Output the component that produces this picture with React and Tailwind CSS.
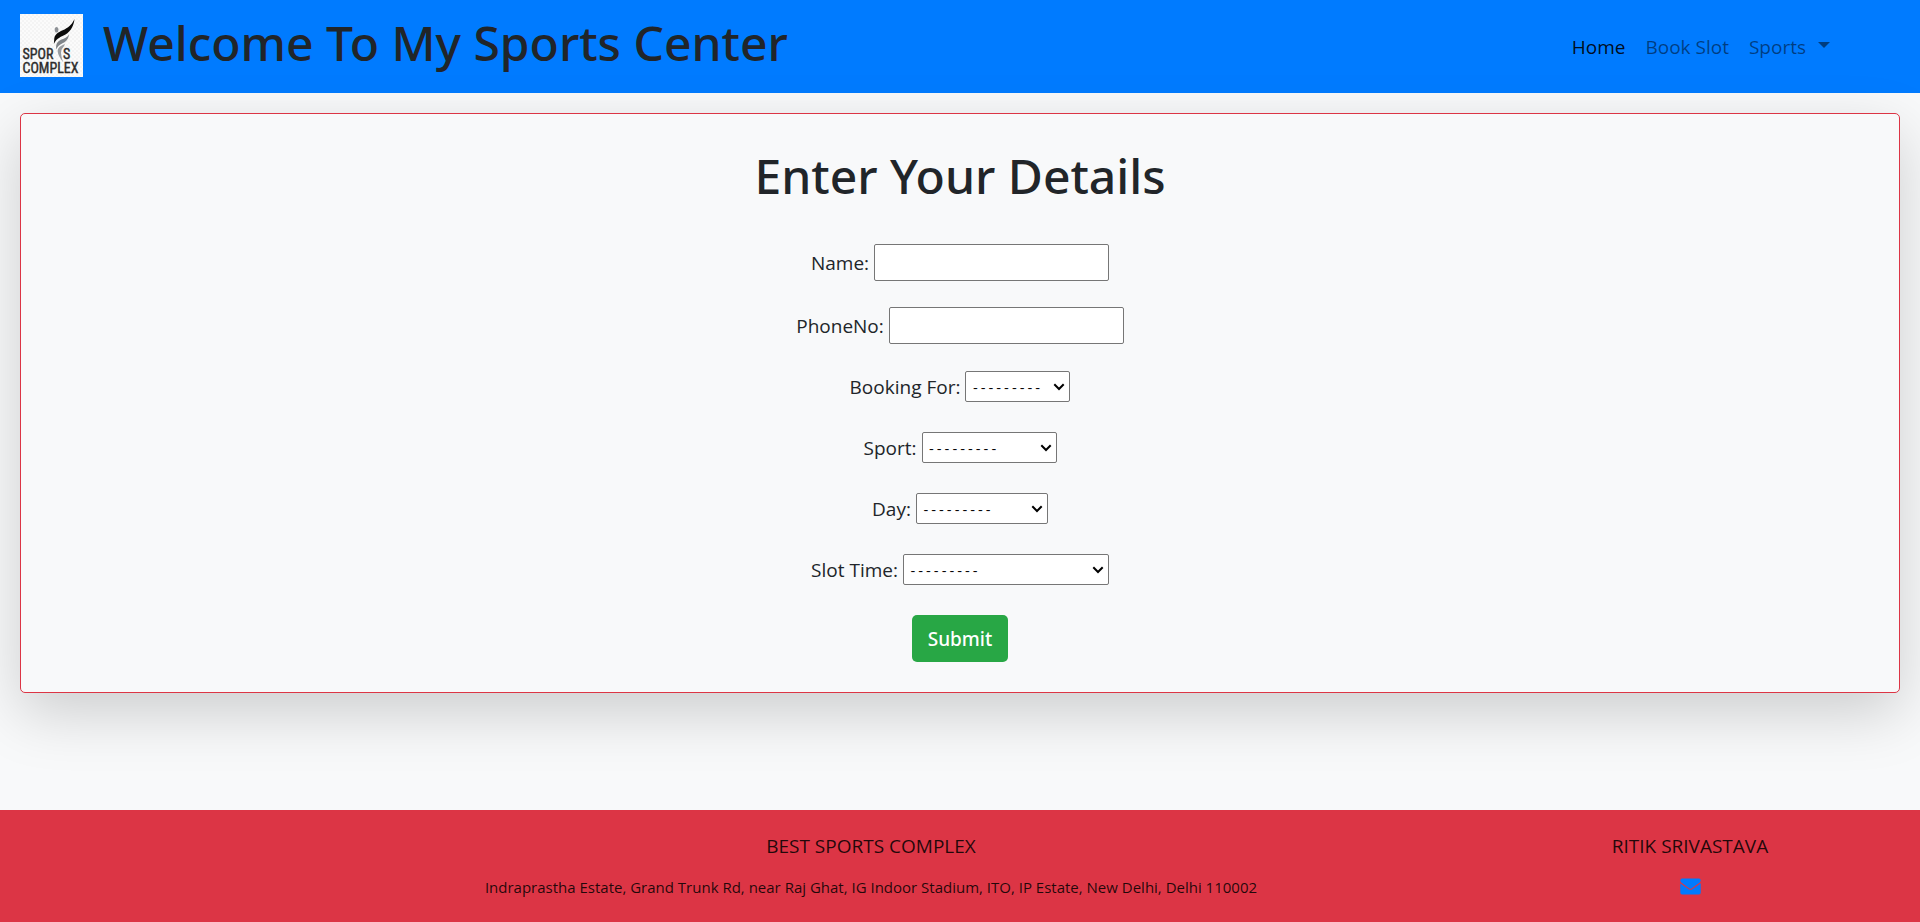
import React from "react";

function Logo() {
  return (
    <svg viewBox="0 0 63 63" className="size-[63px] shrink-0" role="img" aria-label="Sports Complex">
      <defs>
        <pattern id="weave" width="4" height="4" patternUnits="userSpaceOnUse">
          <rect width="4" height="4" fill="#fbfbfb" />
          <rect width="2" height="2" fill="#f4f4f4" />
          <rect x="2" y="2" width="2" height="2" fill="#f4f4f4" />
        </pattern>
      </defs>
      <rect width="63" height="63" fill="url(#weave)" />
      <ellipse cx="36.6" cy="15.8" rx="1.9" ry="2.8" fill="#8d9196" />
      <path d="M54.500 5C52.500 9.500 50 12.500 44.500 15.500C39.500 17.800 35.500 19 34.300 24L33.900 30C36 25.500 39 23.500 43.500 21.500C49 19 53.500 14 54.500 5Z" fill="#0b0b0b" />
      <path d="M49 20.500C47 23.500 44.500 24.300 41.500 25.500C37.500 27.200 35.500 30 36.300 35.500C37.500 31.800 40 30.500 43 29C46 27.500 48.300 25.500 49 20.500Z" fill="#7f8489" />
      <path d="M45 30C43 31 39.500 32 38 35C36.800 38.500 39.500 43.500 43 48C41.500 43 40.600 39.500 41.300 36.500C42 34 44 33 45 30Z" fill="#999da1" />
      <g fill="#2b2b2b" fontFamily="'Liberation Sans Narrow', 'Roboto Condensed', sans-serif" fontSize="14" stroke="#2b2b2b" strokeWidth="0.4">
        <text x="2.500" y="44.500">SPOR</text>
        <text x="43" y="44.500">S</text>
        <text x="2.500" y="58.500">COMPLEX</text>
      </g>
    </svg>
  );
}

function Header() {
  return (
    <header className="flex items-center justify-between bg-[#007bff] pt-[14px] pr-[90px] pb-4 pl-5">
      <div className="flex items-start gap-5">
        <Logo />
        <h1 className="font-['Noto_Sans',sans-serif] text-[48px] leading-[58px] font-medium text-[#212529]">
          Welcome To My Sports Center
        </h1>
      </div>
      <nav aria-label="Main" className="flex items-center gap-5 pt-[3px] text-[19px] leading-[30px]">
        <a href="#home" className="text-black/90">Home</a>
        <a href="#book" className="text-black/50">Book Slot</a>
        <a href="#sports" className="flex items-center gap-3 text-black/50">
          Sports
          <span className="mb-1 border-x-[6px] border-t-[6px] border-x-transparent border-t-black/50" />
        </a>
      </nav>
    </header>
  );
}

function TextField({ id, label, type }) {
  return (
    <div className="flex items-center gap-[5px]">
      <label htmlFor={id}>{label}</label>
      <input id={id} type={type} className="h-[37px] w-[235px] rounded-[2px] border border-[#767676] bg-white px-1" />
    </div>
  );
}

function SelectField({ id, label, width, options }) {
  return (
    <div className="flex items-center gap-[5px]">
      <label htmlFor={id}>{label}</label>
      <div className="relative flex">
        <select
          id={id}
          className={`h-[31px] appearance-none rounded-[2px] border border-[#767676] bg-white pt-[2px] pl-[5px] font-['Liberation_Mono',monospace] text-[13px] text-black ${width}`}
        >
          <option value="">---------</option>
          {options.map((option) => (
            <option key={option}>{option}</option>
          ))}
        </select>
        <svg
          viewBox="0 0 12 8"
          className="pointer-events-none absolute top-[12px] right-[5px] h-2 w-3"
          fill="none"
          stroke="#000"
          strokeWidth="2"
          aria-hidden="true"
        >
          <path d="M1.300 1.300L6 6L10.700 1.300" />
        </svg>
      </div>
    </div>
  );
}

function BookingForm() {
  return (
    <form
      onSubmit={(event) => event.preventDefault()}
      className="m-5 flex flex-col items-center rounded-[5px] border border-[#dc3545] bg-[#f8f9fa] px-5 pt-8 pb-[30px] text-[19px] leading-[30px] text-[#212529] shadow-[0_20px_60px_rgba(0,0,0,0.175)]"
    >
      <h2 className="font-['Noto_Sans',sans-serif] text-[48px] leading-[60px] font-medium">Enter Your Details</h2>
      <div className="mt-[38px] flex flex-col items-center gap-[26px]">
        <TextField id="name" label="Name:" type="text" />
        <TextField id="phone" label="PhoneNo:" type="tel" />
      </div>
      <div className="mt-[27px] flex flex-col items-center gap-[30px]">
        <SelectField id="booking-for" label="Booking For:" width="w-[105px]" options={["Self", "Team"]} />
        <SelectField id="sport" label="Sport:" width="w-[135px]" options={["Cricket", "Football", "Badminton"]} />
        <SelectField id="day" label="Day:" width="w-[132px]" options={["Monday", "Wednesday", "Friday"]} />
        <SelectField id="slot" label="Slot Time:" width="w-[206px]" options={["6:00 AM - 8:00 AM", "4:00 PM - 6:00 PM"]} />
        <button type="submit" className="h-[47px] rounded-[5px] bg-[#28a745] px-4 font-['Noto_Sans',sans-serif] font-medium text-white">
          Submit
        </button>
      </div>
    </form>
  );
}

function Footer() {
  return (
    <footer className="mt-auto grid grid-cols-[101fr_629fr_190fr] bg-[#dc3545] px-10 pt-[21px] pb-5 text-center text-black/85">
      <div className="col-start-2 flex flex-col gap-[11px]">
        <p className="text-[19px] leading-[30px]">BEST SPORTS COMPLEX</p>
        <p className="text-[15px] leading-[30px]">
          Indraprastha Estate, Grand Trunk Rd, near Raj Ghat, IG Indoor Stadium, ITO, IP Estate, New Delhi, Delhi 110002
        </p>
      </div>
      <div className="flex flex-col items-center gap-[10px]">
        <p className="text-[19px] leading-[30px]">RITIK SRIVASTAVA</p>
        <a href="#mail" aria-label="Email" className="flex h-[30px] items-center text-[#007bff]">
          <svg viewBox="0 0 21 17" className="h-[17px] w-[21px]" fill="currentColor">
            <path d="M2 0.500H19Q20.700 0.500 20.700 2.200C20.700 3.600 19.600 4.800 18.400 5.600L12.600 9.700C11.900 10.200 11.200 10.700 10.500 10.700C9.800 10.700 9.100 10.200 8.400 9.700L2.600 5.600C1.600 4.900 0.300 3.700 0.300 2.400Q0.300 0.500 2 0.500Z" />
            <path d="M0.300 5.300C2.700 7.300 5.200 8.800 7.700 10.600C8.600 11.200 9.500 11.900 10.500 11.900C11.500 11.900 12.400 11.200 13.300 10.600C15.800 8.800 18.300 7.200 20.700 5.300V14.800Q20.700 16.600 18.900 16.600H2.100Q0.300 16.600 0.300 14.800Z" />
          </svg>
        </a>
      </div>
    </footer>
  );
}

export default function App() {
  return (
    <div className="flex min-h-screen flex-col bg-[#f8f9fa] font-['Open_Sans','Noto_Sans',sans-serif]">
      <Header />
      <main>
        <BookingForm />
      </main>
      <Footer />
    </div>
  );
}
